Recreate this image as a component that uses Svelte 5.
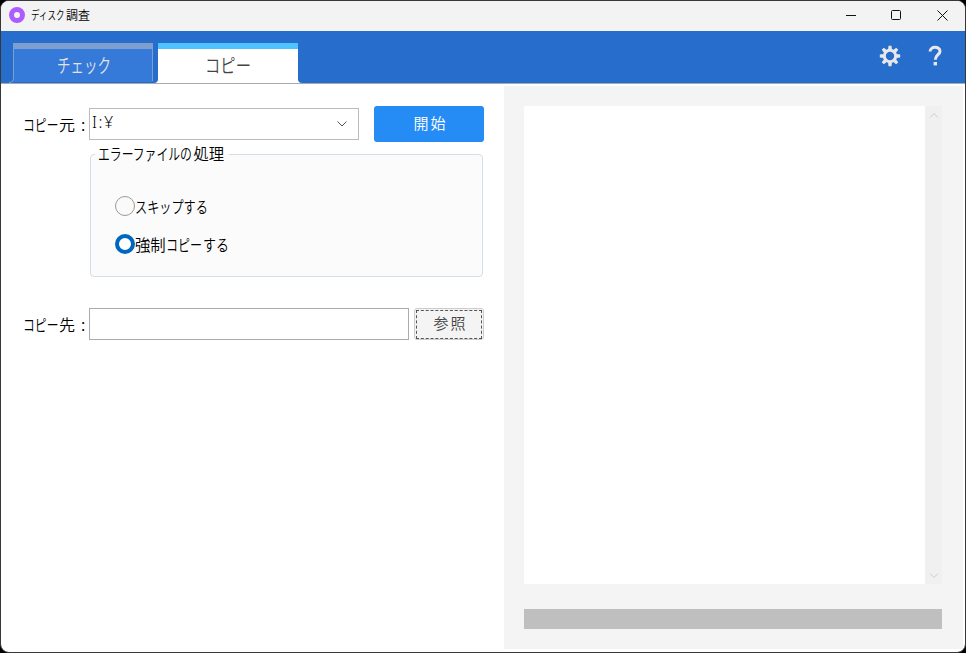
<script>
  let tab = $state('copy')
  let mode = $state('force')
  let target = $state('')

  const tabs = [
    { id: 'check', width: 54, runs: [['チェック', 1, 0.71]] },
    { id: 'copy', width: 47, runs: [['コピー', 0, 0.807]] }
  ]

  const modes = [
    { id: 'skip', width: 74, runs: [['スキップする', 0, 0.76]] },
    { id: 'force', width: 95, runs: [['強制', 0, 0.96], ['コピー', 31, 0.75], ['する', 68, 0.81]] }
  ]
</script>

{#snippet label(runs, width, size)}
  <svg class="text" {width} height="24" font-size={size}>
    {#each runs as [text, x, scale]}
      <text transform="translate({x} 18) scale({scale} 1)">{text}</text>
    {/each}
  </svg>
{/snippet}

<div class="window">
  <div class="titlebar">
    <svg class="logo" width="16" height="16" viewBox="0 0 16 16">
      <circle cx="8" cy="8" r="5.5" fill="none" stroke="#ad5cff" stroke-width="5" />
    </svg>
    <div class="title">{@render label([['ディスク', 0, 0.71], ['調査', 35, 1]], 60, 12)}</div>
    <div class="controls">
      <svg width="46" height="30"><path d="M16 14.5h10" /></svg>
      <svg width="46" height="30"><rect x="15.5" y="9.5" width="9" height="9" rx="1" /></svg>
      <svg width="43" height="30"><path d="M15.5 9.5l10 10M25.5 9.5l-10 10" /></svg>
    </div>
  </div>

  <div class="header">
    <div class="tabs">
      {#each tabs as item}
        <button class="tab" class:active={tab === item.id} onclick={() => (tab = item.id)}>
          <svg class="shape" width="150" height="40">
            {#if tab === item.id}
              <path d="M5 0h140v36q0 4 4 4h-148q4 0 4-4z" fill="#fff" />
              <path d="M5 0h140v6h-140z" fill="#4dc3ff" />
            {:else}
              <path d="M5 0h140v39h-144q4 0 4-4z" fill="#3579d9" />
              <path d="M5 0h140v6h-140z" fill="#7d9fcf" />
              <path d="M1 39.5q4.5 0 4.5-4.5V6M144.500 6v32" fill="none" stroke="#7d9fcf" />
            {/if}
          </svg>
          {@render label(item.runs, item.width, 19)}
        </button>
      {/each}
    </div>
    <div class="tools">
      <svg width="22" height="22" viewBox="-11 -11 22 22">
        <circle r="5.7" fill="none" stroke="#e8e8e8" stroke-width="3" />
        {#each [0, 45, 90, 135, 180, 225, 270, 315] as angle}
          <path d="M-1.900 -6.500L-1.500 -10.200H1.500L1.900 -6.500z" fill="#e8e8e8" transform="rotate({angle})" />
        {/each}
      </svg>
      <svg width="16" height="22" viewBox="0 0 16 22">
        <path d="M3.100 6.500C3.100 0.900 13 0.900 13 6.200C13 9.700 8.300 9.900 8.300 14.800" fill="none" stroke="#e8e8e8" stroke-width="3" />
        <rect x="6.600" y="17" width="3.400" height="3.400" fill="#e8e8e8" />
      </svg>
    </div>
  </div>

  <div class="content">
    <div class="form">
      <div class="row source">
        <div class="name">{@render label([['コピー', 0, 0.74], ['元', 36, 1], [':', 58, 1]], 66, 16)}</div>
        <div class="select">
          <span>I:¥</span>
          <svg width="12" height="8"><path d="M1.500 1.500l4.500 4.500 4.500-4.500" fill="none" stroke="#555" /></svg>
        </div>
        <button class="start">開始</button>
      </div>

      <div class="group">
        <div class="legend">{@render label([['エラーファイルの', 0, 0.74], ['処理', 95.5, 0.96]], 127, 16)}</div>
        {#each modes as item}
          <button class="radio" onclick={() => (mode = item.id)}>
            <span class="mark" class:checked={mode === item.id}></span>
            {@render label(item.runs, item.width, 16)}
          </button>
        {/each}
      </div>

      <div class="row">
        <div class="name">{@render label([['コピー', 0, 0.74], ['先', 36, 1], [':', 58, 1]], 66, 16)}</div>
        <input bind:value={target} />
        <button class="browse"><span>参照</span></button>
      </div>
    </div>

    <div class="result">
      <div class="log">
        <div class="scrollbar">
          <svg width="10" height="8"><path d="M1 6.500l4-4 4 4" /></svg>
          <svg width="10" height="8"><path d="M1 1.500l4 4 4-4" /></svg>
        </div>
      </div>
      <div class="progress"></div>
    </div>
  </div>
</div>

<style>
  :global(body) {
    background: #000;
  }

  .window {
    box-sizing: border-box;
    width: 966px;
    height: 653px;
    border: 1px solid #37373a;
    border-radius: 9px;
    overflow: hidden;
    background: #fff;
    color: #000;
    font-family: "Noto Sans CJK JP", sans-serif;
    font-weight: 350;
  }

  button {
    padding: 0;
    border: none;
    background: none;
    font-family: inherit;
    font-weight: inherit;
  }

  svg {
    display: block;
    flex: none;
  }

  .text {
    overflow: visible;
    fill: currentColor;
  }

  .titlebar {
    display: flex;
    align-items: center;
    height: 30px;
    padding-left: 8px;
    background: #f3f3f3;
  }

  .logo {
    margin-top: -2px;
  }

  .title {
    margin: -4px 0 0 6px;
  }

  .controls {
    display: flex;
    margin-left: auto;
    fill: none;
    stroke: #111;
  }

  .header {
    display: flex;
    justify-content: space-between;
    height: 52px;
    border-bottom: 1px solid #a5a9b0;
    background: #276dcc;
  }

  .tabs {
    display: flex;
    gap: 5px;
    padding: 12px 0 0 12px;
  }

  .tab {
    position: relative;
    display: flex;
    justify-content: center;
    width: 140px;
    height: 40px;
    padding-top: 12px;
    color: #e4e4e4;
  }

  .tab.active {
    color: #444;
  }

  .shape {
    position: absolute;
    top: 0;
    left: -5px;
  }

  .tab .text {
    position: relative;
  }

  .tools {
    display: flex;
    gap: 26px;
    padding: 14px 22px 0 0;
  }

  .content {
    display: flex;
    height: 567px;
    padding: 2px 2px 0 0;
  }

  .form {
    box-sizing: border-box;
    width: 503px;
    padding: 20px 0 0 22px;
  }

  .row {
    display: flex;
    align-items: center;
  }

  .name {
    width: 66px;
    padding-top: 1px;
  }

  .source {
    height: 36px;
  }

  .select {
    box-sizing: border-box;
    display: flex;
    align-items: center;
    justify-content: space-between;
    width: 270px;
    height: 32px;
    padding: 0 10px 0 2px;
    border: 1px solid #bbb;
  }

  .select span {
    margin-top: -4px;
    font: 300 16px "Noto Sans", sans-serif;
    letter-spacing: 1.5px;
  }

  .start {
    width: 110px;
    height: 36px;
    margin-left: 15px;
    padding: 0 0 3px 3px;
    border-radius: 3px;
    background: #258cf5;
    color: #fff;
    font-size: 15px;
    letter-spacing: 2px;
  }

  .group {
    box-sizing: border-box;
    position: relative;
    display: flex;
    flex-direction: column;
    gap: 14px;
    width: 393px;
    height: 123px;
    margin: 12px 0 31px 67px;
    padding: 40px 0 0 24px;
    border: 1px solid #d3dee8;
    border-radius: 4px;
    background: #fbfbfb;
  }

  .legend {
    position: absolute;
    top: -13px;
    left: 4px;
    padding: 0 4px 0 3px;
    background: linear-gradient(#fff 50%, #fbfbfb 50%);
  }

  .radio {
    display: flex;
    align-items: center;
    height: 24px;
    color: #000;
  }

  .mark {
    box-sizing: border-box;
    width: 20px;
    height: 20px;
    margin-top: -2px;
    border: 1px solid #999;
    border-radius: 50%;
    background: #fafafa;
  }

  .mark.checked {
    border: 4.5px solid #0067c0;
    background: #fff;
  }

  input {
    box-sizing: border-box;
    width: 320px;
    height: 32px;
    border: 1px solid #aaaab0;
    outline: none;
    font-size: 16px;
  }

  .browse {
    box-sizing: border-box;
    display: flex;
    width: 70px;
    height: 32px;
    margin-left: 5px;
    padding: 1px;
    border: 1px solid #ccc;
    border-radius: 3px;
    background: #f4f4f4;
    color: #444;
    font-size: 15px;
    letter-spacing: 2px;
  }

  .browse span {
    flex: 1;
    height: 27px;
    border: 1px dashed #555;
    line-height: 24px;
    text-indent: 3px;
  }

  .result {
    box-sizing: border-box;
    width: 459px;
    height: 563px;
    padding: 20px 21px 0 20px;
    background: #f4f4f4;
  }

  .log {
    display: flex;
    justify-content: flex-end;
    height: 478px;
    background: #fff;
  }

  .scrollbar {
    box-sizing: border-box;
    display: flex;
    flex-direction: column;
    align-items: center;
    justify-content: space-between;
    width: 17px;
    padding: 5px 0 4px;
    background: #f0f0f0;
    fill: none;
    stroke: #ccc;
  }

  .progress {
    height: 20px;
    margin-top: 25px;
    background: #bfbfbf;
  }
</style>
